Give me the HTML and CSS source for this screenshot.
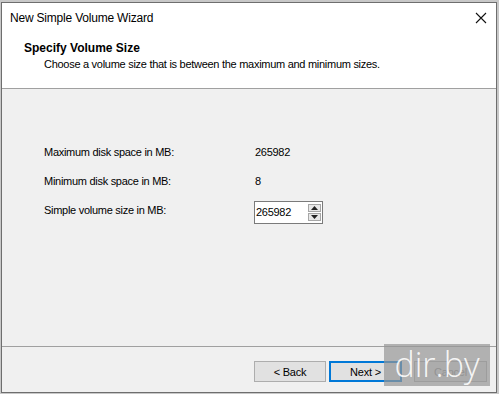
FILE: index.html
```html
<!DOCTYPE html>
<html>
<head>
<meta charset="utf-8">
<link rel="stylesheet" href="styles.css">
</head>
<body>
<div class="window">
  <div class="titlebar">
    <span class="title">New Simple Volume Wizard</span>
    <svg class="close" width="12" height="12" viewBox="0 0 12 12"><path d="M1 1 L11 11 M11 1 L1 11" stroke="#111" stroke-width="1.1" fill="none"/></svg>
  </div>
  <div class="header">
    <div class="h-title">Specify Volume Size</div>
    <div class="h-sub">Choose a volume size that is between the maximum and minimum sizes.</div>
  </div>
  <div class="content">
    <div class="row"><span class="label">Maximum disk space in MB:</span><span class="value">265982</span></div>
    <div class="row"><span class="label">Minimum disk space in MB:</span><span class="value">8</span></div>
    <div class="row spinrow"><span class="label">Simple volume size in MB:</span>
      <div class="spin"><span class="spin-val">265982</span>
        <div class="arrows">
          <div class="arr"><svg width="7" height="4" viewBox="0 0 7 4"><path d="M0 4 L3.5 0 L7 4 Z" fill="#222"/></svg></div>
          <div class="arr"><svg width="7" height="4" viewBox="0 0 7 4"><path d="M0 0 L3.5 4 L7 0 Z" fill="#222"/></svg></div>
        </div>
      </div>
    </div>
  </div>
  <div class="footer">
    <button class="btn back">&lt; Back</button>
    <button class="btn primary">Next &gt;</button>
    <button class="btn cancel">Cancel</button>
  </div>
  <div class="watermark">dir.by</div>
</div>
</body>
</html>
```
FILE: styles.css
```css
html, body { margin: 0; padding: 0; }
body {
  width: 499px; height: 394px; overflow: hidden;
  background: #c8c8c8;
  font-family: "Liberation Sans", Arial, sans-serif;
  font-size: 12px; color: #000;
}
.window {
  position: relative;
  margin: 2px 0 0 1px;
  width: 496px; height: 391px;
  border: 1px solid #6e6e6e;
  box-sizing: border-box;
  background: #f0f0f0;
  display: flex; flex-direction: column;
}
.titlebar {
  height: 29px; background: #fff;
  display: flex; align-items: center; justify-content: space-between;
  padding: 0 9px 0 8px;
}
.title { font-size: 12px; padding-top: 1px; letter-spacing: -0.2px; }
.header {
  background: #fff; height: 57px;
  border-bottom: 1px solid #a0a0a0;
  padding: 9px 0 0 22px; box-sizing: border-box;
}
.h-title { font-weight: bold; font-size: 12px; }
.h-sub { margin: 3px 0 0 20px; font-size: 11px; letter-spacing: -0.28px; }
.content {
  flex: 1;
  padding: 48px 0 0 42px;
  border-bottom: 1px solid #a0a0a0;
  font-size: 11px; letter-spacing: -0.28px;
}
.row { display: flex; align-items: center; height: 29px; }
.label { width: 211px; }
.spin {
  width: 69px; height: 23px; box-sizing: border-box;
  border: 1px solid #7a7a7a; background: #fff;
  display: flex; align-items: center; justify-content: space-between;
  padding: 0 1px 0 1px; margin-top: 5px; margin-left: -1px;
}
.arrows { display: flex; flex-direction: column; gap: 1px; }
.arr {
  width: 13px; height: 8px; box-sizing: border-box;
  border: 1px solid #a6a6a6; background: #e8e8e8;
  display: flex; align-items: center; justify-content: center;
}
.footer {
  height: 45px; display: flex; align-items: flex-start;
  padding: 14px 0 0 252px; box-sizing: border-box;
}
.btn {
  width: 73px; height: 21px; box-sizing: border-box;
  border: 1px solid #adadad; background: #e1e1e1;
  font-family: "Liberation Sans", Arial, sans-serif; font-size: 11px; letter-spacing: -0.2px; color: #000;
  padding: 0;
}
.btn.back { width: 72px; }
.btn.primary { border: 2px solid #0078d7; margin-left: 3px; }
.btn.cancel { margin-left: 12px; color: #8a8a8a; }
.watermark {
  position: absolute; left: 382px; top: 341px;
  width: 106px; height: 42px;
  background: rgba(150,150,150,0.7);
  color: rgba(255,255,255,0.9); font-family: "Open Sans", "DejaVu Sans", sans-serif;
  font-size: 34px; line-height: 40px; text-align: center; font-weight: 300;
}
```
